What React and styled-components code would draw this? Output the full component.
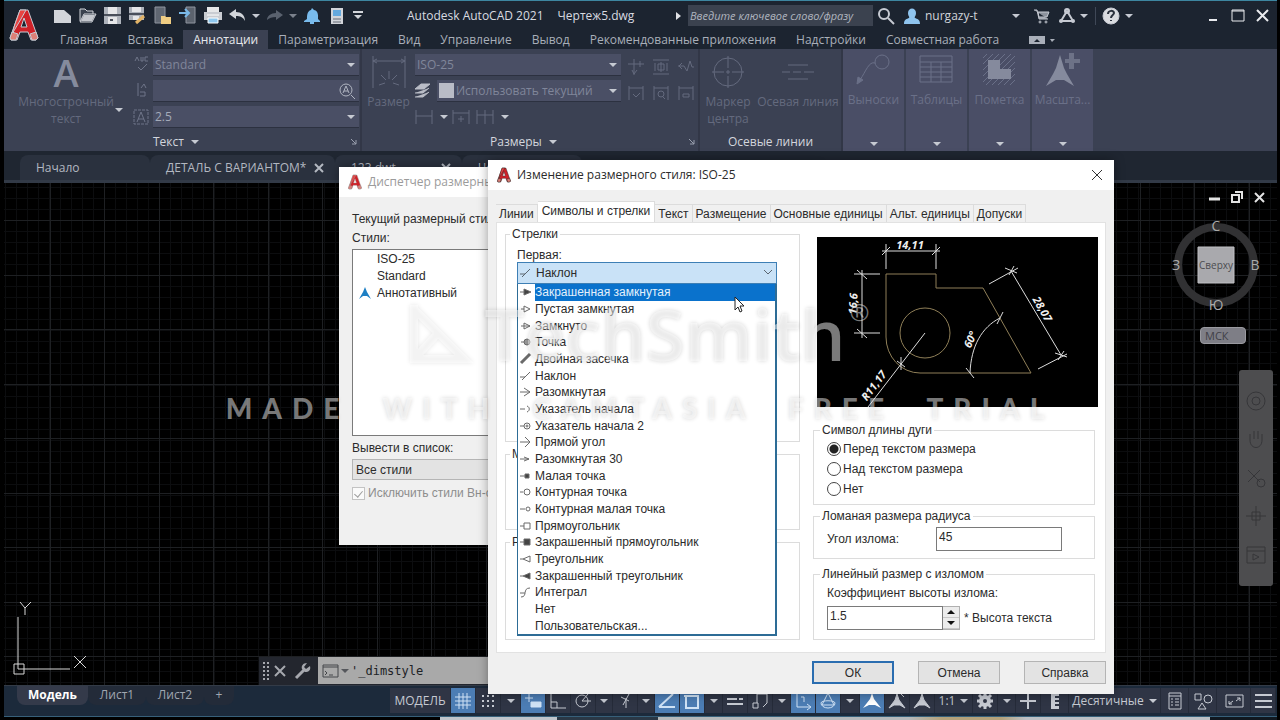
import React from 'react';
import styled, { createGlobalStyle, css } from 'styled-components';

const GlobalStyle = createGlobalStyle`
  * {
    box-sizing: border-box;
  }

  body {
    margin: 0;
    background: #000;
  }

  button,
  input,
  select {
    font: inherit;
    color: inherit;
    margin: 0;
  }
`;

const uiFont = '"Open Sans", "Noto Sans", sans-serif';
const dialogFont = '"Liberation Sans", Arial, sans-serif';

const Page = styled.div`
  position: relative;
  min-height: 100vh;
  display: flex;
  flex-direction: column;
  padding: 0 3px 0 4px;
  overflow: hidden;
  background: #000;
  color: #c6cad2;
  font-family: ${uiFont};
  font-size: 12px;
  line-height: 16px;
`;

const Svg = styled.svg`
  display: block;
  flex: none;
  fill: none;
  stroke: currentColor;
  overflow: visible;
`;

const Caret = styled.span`
  flex: none;
  width: 0;
  height: 0;
  border: 4px solid transparent;
  border-top-color: ${props => props.$color || '#c6cad2'};
  border-bottom-width: 0;
`;

const PlainButton = styled.button`
  display: flex;
  align-items: center;
  justify-content: center;
  flex: none;
  width: ${props => props.$width || 25}px;
  padding: 0;
  border: 0;
  background: none;
`;

/* header */

const Header = styled.header`
  display: flex;
  border-top: 1px solid #3d86a0;
  background: #1c2430;
`;

const AppButton = styled(PlainButton)`
  width: 46px;
  padding-right: 6px;
`;

const HeaderRows = styled.div`
  flex: 1;
  min-width: 0;
`;

const TitleBar = styled.div`
  height: 29px;
  display: flex;
  align-items: center;
`;

const DocTitle = styled.div`
  display: flex;
  gap: 14px;
  margin-left: 40px;
  color: #d8dbe0;
  white-space: nowrap;
`;

const TitleTools = styled.div`
  display: flex;
  align-items: center;
  margin: 0 2px 0 auto;
`;

const SearchInput = styled.input`
  width: 185px;
  height: 21px;
  margin-left: 6px;
  padding: 0 2px;
  border: 0;
  background: #3b424f;
  font-size: 11px;
  font-style: italic;

  &::placeholder {
    color: #b0b5bf;
    opacity: 1;
  }
`;

const UserButton = styled(PlainButton)`
  width: 131px;
  justify-content: flex-start;
  gap: 4px;
  padding-left: 5px;
  color: #d0d3d9;

  ${Caret} {
    margin: 0 9px 0 auto;
  }
`;

const Divider = styled.span`
  width: 1px;
  height: 18px;
  margin: 0 2px 0 6px;
  background: #3f4857;
`;

const WindowButtons = styled.div`
  display: flex;
  margin-left: 65px;
  color: #e9ebee;
`;

const MenuTabs = styled.nav`
  display: flex;
  height: 19px;
`;

const MenuTab = styled.a`
  padding: 2px 10px 0;
  color: ${props => (props.$active ? '#e6e8ec' : '#a9afb9')};
  background: ${props => (props.$active ? '#3b4152' : 'none')};
  text-decoration: none;
  white-space: nowrap;
`;

/* ribbon */

const Ribbon = styled.section`
  display: flex;
  height: 102px;
  background: #3b4153;
  color: #646a7e;
`;

const Panel = styled.div`
  display: grid;
  grid-template-rows: 1fr 19px;
  flex: none;
  width: ${props => props.$width}px;
  border-right: 2px solid #323747;
`;

const PanelBody = styled.div`
  display: flex;
  padding-top: 5px;
`;

const PanelTitle = styled.div`
  display: flex;
  align-items: center;
  justify-content: center;
  gap: 7px;
  padding-left: ${props => props.$indent || 0}px;
  color: #d3d6dd;
`;

const TitleButton = styled(PlainButton)`
  width: auto;
  gap: 7px;
  color: inherit;
  ${props => props.$left && css`margin-right: auto;`}
`;

const Launcher = styled(PlainButton)`
  width: 12px;
  color: #9aa0af;
`;

const BigButton = styled.button`
  display: flex;
  flex-direction: column;
  align-items: center;
  gap: 3px;
  flex: none;
  width: ${props => props.$width}px;
  margin-left: ${props => props.$indent || 0}px;
  padding: 0;
  border: 0;
  background: none;
  color: inherit;
  line-height: 17px;
  text-align: center;
`;

const BigIcon = styled.span`
  height: 36px;
  display: flex;
  align-items: center;
`;

const BigLetter = styled.span`
  height: 36px;
  color: #858b9d;
  font-size: 38px;
  font-weight: 600;
  line-height: 36px;
`;

const SideCaret = styled(Caret)`
  margin: 54px 6px 0 0;
`;

const IconColumn = styled.div`
  display: flex;
  flex-direction: column;
  justify-content: space-between;
  align-items: center;
  width: 24px;
  height: 73px;
  padding: 2px 0;
  color: #6f7589;
`;

const Fields = styled.div`
  display: flex;
  flex-direction: column;
  gap: 4px;
  width: 206px;
  height: 74px;
`;

const FieldRow = styled.div`
  display: flex;
  align-items: center;
  height: 22px;
`;

const Field = styled.div`
  flex: 1;
  height: 22px;
  display: flex;
  align-items: center;
  padding-right: 4px;
  border-bottom: 1px solid #2c3140;
  background: #4a4f65;
  color: ${props => (props.$bright ? '#a5abb9' : '#80869a')};

  select,
  input {
    flex: 1;
    min-width: 0;
    height: 20px;
    padding: 0 2px;
    border: 0;
    appearance: none;
    background: none;
    opacity: 1;
  }
`;

const Swatch = styled.span`
  width: 15px;
  height: 15px;
  margin-left: 2px;
  background: #b9bcc6;
`;

const SmallGrid = styled.div`
  display: grid;
  grid-template-columns: repeat(3, 25px);
  grid-auto-rows: 26px;
  place-items: center;
  margin-left: 2px;
  height: 52px;
`;

const CollapsedPanel = styled.button`
  display: flex;
  flex-direction: column;
  align-items: center;
  gap: 5px;
  flex: none;
  width: 61px;
  margin-right: 2px;
  padding: 4px 0 5px;
  border: 0;
  background: #4a4e66;
  color: #6a7088;

  ${Caret} {
    margin-top: auto;
  }
`;

const FileTabs = styled.nav`
  display: flex;
  align-items: flex-end;
  height: 32px;
  padding-left: 16px;
  border-bottom: 3px solid #323a47;
  background: #1f2631;
`;

const FileTab = styled.a`
  display: flex;
  align-items: center;
  justify-content: space-between;
  width: ${props => props.$width}px;
  height: 25px;
  padding: 0 12px 0 16px;
  border-radius: 8px 8px 0 0;
  background: #2a313e;
  color: #b3b8c1;
  text-decoration: none;
  white-space: nowrap;
`;

/* drawing area */

const Canvas = styled.main`
  position: relative;
  flex: 1;
  min-height: 400px;
  background-color: #000;
  background-image:
    linear-gradient(90deg, #1e2023 1px, transparent 1px),
    linear-gradient(90deg, #1e2023 1px, transparent 1px),
    linear-gradient(#1e2023 1px, transparent 1px),
    linear-gradient(#1e2023 1px, transparent 1px),
    linear-gradient(90deg, #0c0d0f 1px, transparent 1px),
    linear-gradient(#0c0d0f 1px, transparent 1px);
  background-size: 109px 100%, 109px 100%, 100% 109px, 100% 109px, 11px 100%, 100% 11px;
  background-position: 100px 0, 46px 0, 0 92px, 0 37px, 1px 0, 0 4px;
`;

const Ucs = styled(Svg)`
  position: absolute;
  left: 8px;
  bottom: 8px;
  color: #d8d8d8;
`;

const ViewTools = styled.div`
  position: absolute;
  top: 0;
  right: 4px;
  width: 100px;
  display: flex;
  flex-direction: column;
  align-items: center;
`;

const ViewButtons = styled.div`
  display: flex;
  gap: 2px;
  align-self: flex-end;
  padding: 8px 4px 8px 0;
  color: #e3e3e3;
`;

const CubeText = styled.text`
  fill: ${props => (props.$dark ? '#4c4c50' : '#aaa')};
  stroke: none;
  font-size: ${props => (props.$dark ? 10 : 14)}px;
  text-anchor: middle;
`;

const UcsName = styled.button`
  width: 46px;
  height: 17px;
  margin-top: 16px;
  padding: 0 0 0 4px;
  border: 1px solid #9a9aa0;
  border-radius: 4px;
  background: #7e7e86;
  color: #3f4046;
  font-size: 11px;
  line-height: 13px;
  text-align: left;
`;

const NavBar = styled.div`
  display: flex;
  flex-direction: column;
  align-items: center;
  justify-content: space-around;
  align-self: flex-end;
  width: 34px;
  height: 216px;
  margin-top: 26px;
  padding: 12px 0;
  border-radius: 3px;
  background: #4d4d4f;
  color: #363639;
`;

const CommandLine = styled.div`
  position: absolute;
  left: 255px;
  right: 300px;
  bottom: 0;
  display: flex;
  height: 28px;
  background: #23262e;
  color: #a6a8ae;
`;

const CommandField = styled.label`
  display: flex;
  align-items: center;
  flex: 1;
  gap: 2px;
  margin-bottom: 1px;
  padding-left: 4px;
  background: #a9a9a9;
  color: #44464a;

  input {
    flex: 1;
    min-width: 0;
    padding: 0;
    border: 0;
    background: none;
    color: #202226;
    font-family: "DejaVu Sans Mono", "Liberation Mono", monospace;
    font-size: 12px;
  }
`;

/* bottom bar */

const BottomBar = styled.footer`
  display: flex;
  justify-content: space-between;
  height: 32px;
  border-top: 1px solid #333b47;
  border-bottom: 1px solid #37607a;
  background: #1c2a3b;
`;

const LayoutTabs = styled.nav`
  display: flex;
  height: 19px;
  padding-left: 13px;
`;

const LayoutTab = styled.a`
  width: ${props => props.$width}px;
  padding-top: 1px;
  border-radius: 0 0 8px 8px;
  background: ${props => (props.$active ? '#343a4a' : '#232b39')};
  color: ${props => (props.$active ? '#fff' : '#a0a6b1')};
  font-weight: ${props => (props.$active ? 700 : 400)};
  text-align: center;
  text-decoration: none;
`;

const StatusTools = styled.div`
  display: flex;
  height: 25px;
  margin: 2px 1px 0 0;
  background: #2f3545;
`;

const StatusButton = styled(PlainButton)`
  gap: 5px;
  border-right: 1px solid #252b39;
  background: ${props => (props.$on ? '#4c7db4' : 'none')};
  color: ${props => (props.$on ? '#cfe2f5' : '#c6cad2')};
  white-space: nowrap;
`;

const Taskbar = styled.div`
  height: 3px;
  margin-left: 436px;
  background: linear-gradient(90deg, #bfc5cb 14%, #2a3846 14% 26%, #b5b9bb 26% 56%, #b4a27a 60% 67%, #bdc1c6 70% 92%, #101820 92%);
`;

/* dialogs */

const Dialog = styled.div`
  position: absolute;
  left: ${props => props.$x}px;
  top: ${props => props.$y}px;
  width: ${props => props.$width}px;
  background: #f0f0f0;
  color: #2b2b2b;
  font-family: ${dialogFont};
  font-size: 12px;
  line-height: 14px;
  box-shadow: 0 0 10px rgba(0, 0, 0, 0.35);
`;

const DialogHead = styled.div`
  display: flex;
  align-items: center;
  gap: 6px;
  height: 30px;
  padding: 0 5px 0 9px;
  background: #fff;
  color: ${props => (props.$inactive ? '#9b9b9b' : '#2b2b2b')};
  font-family: ${uiFont};
  white-space: nowrap;

  button {
    margin-left: auto;
    color: #333;
  }
`;

const ManagerBody = styled.div`
  height: 348px;
  padding: 15px 13px;
`;

const ListLabel = styled.div`
  margin-top: 5px;
`;

const StyleList = styled.ul`
  height: 187px;
  width: 170px;
  margin: 4px 0 5px;
  padding: 0;
  border: 1px solid #7a7a7a;
  background: #fff;
  list-style: none;
`;

const StyleItem = styled.li`
  display: flex;
  align-items: center;
  height: 17px;

  > span:first-child {
    width: 24px;
    padding-left: 6px;
    color: #1d7fc4;
  }
`;

const ListFilter = styled.select`
  display: block;
  width: 170px;
  height: 21px;
  margin: 4px 0 6px;
  padding: 0 3px;
  border: 1px solid #b5b5b5;
  background: #e3e3e3;
  appearance: none;
`;

const CheckLabel = styled.label`
  display: flex;
  align-items: center;
  gap: 3px;
  color: #8d8d8d;
  white-space: nowrap;

  input {
    display: flex;
    align-items: center;
    justify-content: center;
    width: 13px;
    height: 13px;
    border: 1px solid #c3c3c3;
    background: #fafafa;
    appearance: none;
  }

  input:checked::before {
    content: '';
    width: 4px;
    height: 7px;
    border: solid #9c9c9c;
    border-width: 0 1px 1px 0;
    transform: rotate(40deg);
  }
`;

const EditBody = styled.div`
  padding: 11px 8px 10px;
`;

const TabList = styled.div`
  display: flex;
  align-items: flex-end;
  height: 21px;
`;

const Tab = styled.button`
  height: ${props => (props.$active ? 21 : 18)}px;
  padding: ${props => (props.$active ? '0 4px 3px' : '0 3px')};
  border: 1px solid #dcdcdc;
  border-width: 1px 1px 0 0;
  background: ${props => (props.$active ? '#fff' : '#f0f0f0')};
  white-space: nowrap;
`;

const TabPanel = styled.div`
  display: grid;
  grid-template-columns: 295px 282px;
  justify-content: space-between;
  height: 431px;
  padding: 4px 10px 15px 8px;
  border: 1px solid #e2e2e2;
  background: #fff;
`;

const LeftColumn = styled.div`
  display: grid;
  grid-template-rows: 215px 83px 1fr;
  gap: 5px;
`;

const RightColumn = styled.div`
  display: flex;
  flex-direction: column;
  padding-top: 10px;
`;

const Group = styled.fieldset`
  min-width: 0;
  margin: 0;
  padding: ${props => props.$pad || '0 11px'};
  border: 1px solid #dcdcdc;
  ${props => props.$height && css`height: ${props.$height}px;`}
  ${props => props.$top && css`margin-top: ${props.$top}px;`}

  legend {
    margin-left: -7px;
    padding: 0 2px;
    white-space: nowrap;
  }
`;

const ComboLabel = styled.label`
  display: block;
  margin-top: 7px;
`;

const Combo = styled.div`
  position: relative;
  width: 260px;
`;

const ComboSelect = styled.select`
  display: block;
  width: 100%;
  height: 22px;
  padding: 0 18px;
  border: 1px solid #3d7fb5;
  background: #c9e2f7;
  appearance: none;
`;

const ComboMark = styled.span`
  position: absolute;
  top: 5px;
  ${props => (props.$right ? 'right: 4px;' : 'left: 3px;')}
  color: #5b6670;
  pointer-events: none;
`;

const Options = styled.ul`
  position: absolute;
  z-index: 1;
  top: 22px;
  left: 0;
  right: 0;
  display: flex;
  flex-direction: column;
  height: 352px;
  margin: 0;
  padding: 0;
  border: 1px solid #2d6c96;
  border-width: 0 2px 2px 1px;
  background: #fff;
  list-style: none;
`;

const Option = styled.li`
  flex: 1;
  display: flex;
  align-items: center;
  min-height: 0;

  > span:first-child {
    width: 17px;
    padding-left: 2px;
    color: #6a6a6a;
  }

  > span:last-child {
    flex: 1;
    align-self: stretch;
    display: flex;
    align-items: center;
    background: ${props => (props.$selected ? '#0a72cc' : 'none')};
    color: ${props => (props.$selected ? '#e3f0fb' : 'inherit')};
  }
`;

const Preview = styled.svg`
  display: block;
  width: 281px;
  height: 170px;
  margin: 0 0 16px 4px;
  background: #000;
  fill: none;
  stroke: #dcdcdc;

  text {
    fill: #f0f0f0;
    stroke: none;
    font: italic 700 11px ${uiFont};
    text-anchor: middle;
  }
`;

const Radio = styled.label`
  display: flex;
  align-items: center;
  gap: 2px;
  height: 20px;

  input {
    appearance: none;
    width: 14px;
    height: 14px;
    border: 1px solid #444;
    border-radius: 50%;
    background: #fff;
  }

  input:checked {
    background: radial-gradient(circle, #222 0 4px, #fff 5px);
  }
`;

const InputRow = styled.div`
  display: flex;
  align-items: center;
  gap: ${props => props.$gap || 0}px;
  margin-top: ${props => props.$top || 0}px;

  label {
    min-width: ${props => props.$label || 0}px;
  }
`;

const TextInput = styled.input`
  width: ${props => props.$width}px;
  height: 24px;
  padding: 0 2px 4px;
  border: 1px solid #7a7a7a;
  background: #fff;
`;

const Spinner = styled.div`
  display: flex;

  > div {
    display: grid;
    width: 17px;
    border: 1px solid #b0b0b0;
    border-left: 0;
  }

  button {
    width: auto;
    background: #ececec;
    border-bottom: 1px solid #c8c8c8;
  }
`;

const Up = styled(Caret)`
  border-color: transparent transparent #111;
  border-width: 0 4px 4px;
`;

const DialogButtons = styled.div`
  display: flex;
  justify-content: flex-end;
  gap: 24px;
  margin-top: 8px;
`;

const DialogButton = styled.button`
  width: 82px;
  height: 23px;
  padding: 0;
  border: ${props => (props.$primary ? '2px solid #2a6db0' : '1px solid #b4b4b4')};
  background: #e3e3e3;
`;

/* watermark */

const Watermark = styled.div`
  position: absolute;
  z-index: 2;
  top: 286px;
  left: 0;
  right: 0;
  display: flex;
  flex-direction: column;
  align-items: center;
  color: rgba(255, 255, 255, 0.48);
  text-shadow: 0 0 4px rgba(0, 0, 0, 0.16);
  pointer-events: none;
`;

const Brand = styled.div`
  display: flex;
  align-items: center;
  gap: 16px;
  font-size: 71px;
  font-weight: 600;
  line-height: 96px;

  svg {
    filter: drop-shadow(0 0 2px rgba(0, 0, 0, 0.2));
  }

  sup {
    align-self: flex-start;
    margin-left: -12px;
    font-size: 24px;
    font-weight: 400;
    line-height: 52px;
  }
`;

const Slogan = styled.div`
  margin-top: 8px;
  font-family: Lato, ${uiFont};
  font-size: 28px;
  font-weight: 900;
  line-height: 36px;
  letter-spacing: 10px;
  white-space: pre;
`;

const Pointer = styled(Svg)`
  position: absolute;
  z-index: 3;
  left: 734px;
  top: 296px;
`;

const Icon = ({ size = 16, width, stroke = 1, children }) => (
  <Svg
    width={width || size}
    height={size}
    viewBox={`0 0 ${width || size} ${size}`}
    strokeWidth={stroke}
    aria-hidden="true"
  >
    {children}
  </Svg>
);

const RedA = ({ size }) => (
  <Svg width={size} height={size} viewBox="0 0 28 30" stroke="none" aria-hidden="true">
    <path d="M10 0h8l10 28-2 2h-5l-3-8H10l-3 8H1l-1-2zM14 8l-3 9h6z" fill="#cf2128" fillRule="evenodd" />
    <path d="M10 0h6l-5 9-9 15 3-10z" fill="#e84442" />
    <path d="M2 22l6 2-2 6H1l-1-2zM26 22l-6 2 2 6h4l2-2z" fill="#dd8078" />
  </Svg>
);

const Person = () => (
  <Icon size={18}>
    <path d="M1 17c0-5 3-5 5-6 1-1-1-2-1-5 0-6 8-6 8 0 0 3-2 4-1 5 2 1 5 1 5 6z" fill="#8fc4ee" stroke="none" />
  </Icon>
);

const quickTools = [
  ['Новый', <path key="a" d="M0 3h10l7 6v7H0z" fill="#d2d5da" stroke="none" />],
  ['Открыть', <g key="a"><path d="M1 14V2h5l2 2h6v3M1 15l4-8h12l-4 8z" fill="#3a424e" stroke="#d2d5da" /><path d="M5 8h11l-3 6H2z" fill="#c5c8ce" stroke="none" /></g>],
  ['Сохранить', <g key="a"><path d="M0 0h17v17H0z" fill="#aeb3bb" stroke="none" /><path d="M4 0h9v7H4zM4 10h9v7H4z" fill="#e6e7e9" stroke="none" /><path d="M0 8h17M6 13h3" stroke="#4a505b" strokeWidth="2" /></g>],
  ['Сохранить как', <g key="a"><path d="M0 0h15v13H0z" fill="#aeb3bb" stroke="none" /><path d="M3 0h9v5H3zM4 9h6v4H4z" fill="#e6e7e9" stroke="none" /><path d="M0 7h15" stroke="#4a505b" strokeWidth="2" /><path d="M7 16l8-7" stroke="#e2b468" strokeWidth="3" /></g>],
  ['Открыть из облака', <g key="a"><path d="M1 0h10v16H1z" fill="#606772" stroke="#8f959f" /><path d="M7 9h4l1 1h5v7H7z" fill="#f0cd83" stroke="none" /></g>],
  ['Сохранить в облаке', <g key="a"><path d="M7 0h9v16H7z" fill="#5c636e" stroke="#8f959f" /><path d="M0 6h9M6 2l4 4-4 4" stroke="#7ab9e8" strokeWidth="2" /></g>],
  ['Печать', <g key="a"><path d="M3 0h12v5H3z" fill="#e6e7e9" stroke="none" /><path d="M0 5h18v8H0z" fill="#c9ccd2" stroke="none" /><path d="M3 8h12M4 11h10v5H4z" fill="#8fc8ef" stroke="#fff" /></g>],
  ['Отменить', <path key="a" d="M0 7l7-5v3c5 0 9 3 9 9-2-4-5-5-9-5v3z" fill="#d2d5da" stroke="none" />],
];

const menuTabs = [
  'Главная', 'Вставка', 'Аннотации', 'Параметризация', 'Вид', 'Управление',
  'Вывод', 'Рекомендованные приложения', 'Надстройки', 'Совместная работа',
];

const dimIcons = [
  <path key="1" d="M0 5h16M6 0v16M12 2v6M4 11l2 4 3-4" />,
  <path key="2" d="M0 1h16M0 15h16M8 3v10M2 4v8M14 4v8M5 5h6v6H5z" />,
  <path key="3" d="M0 7h6l3 5 3-10 2 6h2M4 4L1 7l3 3" />,
  <path key="4" d="M1 1v14M15 1v14M1 3h14M5 9l3 3 4-4" />,
  <path key="5" d="M1 1v14M15 1v14M1 3h14M5 9a3 3 0 106 0 3 3 0 10-6 0M10 12l2 2" />,
  <path key="6" d="M1 1v14M15 1v14M1 3h14M5 9h6v3H5z" />,
];

const collapsed = [
  ['Выноски', <g key="a"><circle cx="25" cy="9" r="7" /><path d="M18 10c-6-2-9 8-15 17" /><path d="M0 31l1-7 5 3z" fill="currentColor" /></g>],
  ['Таблицы', <path key="a" d="M0 3h32v26H0zM0 9h32M0 14h32M0 19h32M0 24h32M11 9v20M21 9v20" />],
  ['Пометка', <g key="a"><path d="M0 5l4-4M0 11L10 1M0 17L16 1M0 23L22 1M0 29L28 1M3 32L32 3M9 32l23-23M15 32l17-17M21 32l11-11M27 32l5-5" /><path d="M5 7h12v9h11v10H5z" fill="#858a9d" stroke="none" /></g>],
  ['Масшта...', <g key="a" stroke="none" fill="#858a9d"><path d="M14 2l4 13 3 6 7 12-10-6h-8L0 33l7-12 3-6z" /><path d="M23 0h5v6h6v4h-6v6h-5v-6h-4V6h4z" fill="#6d7287" /></g>],
];

const arrows = [
  ['Закрашенная замкнутая', <path key="a" d="M0 6h4M4 3l7 3-7 3z" fill="#444" />],
  ['Пустая замкнутая', <path key="a" d="M1 6h3M4 3l6 3-6 3z" />],
  ['Замкнуто', <path key="a" d="M1 6h9M4 3l6 3-6 3z" />],
  ['Точка', <path key="a" d="M1 6h3M4 6a3 3 0 106 0 3 3 0 10-6 0" fill="#999" />],
  ['Двойная засечка', <path key="a" d="M1 10l9-9" strokeWidth="3" />],
  ['Наклон', <path key="a" d="M0 7h5M2 10l8-8" />],
  ['Разомкнутая', <path key="a" d="M0 6h10M4 2l6 4-6 4" />],
  ['Указатель начала', <path key="a" d="M0 6h5M7 3c3 1 3 5 0 6" />],
  ['Указатель начала 2', <g key="a"><path d="M0 6h4" /><circle cx="7" cy="6" r="3" /><circle cx="7" cy="6" r="1" /></g>],
  ['Прямой угол', <path key="a" d="M0 6h10M5 1l5 5-5 5" />],
  ['Разомкнутая 30', <path key="a" d="M0 6h9M4 4l5 2-5 2" />],
  ['Малая точка', <path key="a" d="M0 6h5M5 4h4v4H5z" fill="#444" />],
  ['Контурная точка', <g key="a"><path d="M0 6h3" /><circle cx="7" cy="6" r="3" /></g>],
  ['Контурная малая точка', <g key="a"><path d="M0 6h5" /><circle cx="8" cy="6" r="2" /></g>],
  ['Прямоугольник', <path key="a" d="M0 6h4M4 3h6v6H4z" />],
  ['Закрашенный прямоугольник', <path key="a" d="M0 6h4M4 3h6v6H4z" fill="#444" />],
  ['Треугольник', <path key="a" d="M0 6h3M10 3L3 6l7 3z" />],
  ['Закрашенный треугольник', <path key="a" d="M0 6h3M10 3L3 6l7 3z" fill="#444" />],
  ['Интеграл', <path key="a" d="M0 7h5M1 11c7 0 1-9 9-9" />],
  ['Нет', null],
  ['Пользовательская...', null],
];

const statusItems = [
  { label: 'Сетка', on: true, icon: <path d="M4 0v16M8 0v16M12 0v16M0 4h16M0 8h16M0 12h16" /> },
  { label: 'Привязка к сетке', icon: <path d="M2 3h12M2 8h12M2 13h12" strokeWidth="2" strokeDasharray="2 3" /> },
  { caret: true, width: 20 },
  { label: 'Динамический ввод', on: true, icon: <path d="M0 5h8M4 1v8M6 9h10v5H6z" fill="currentColor" /> },
  { label: 'Ортогональный режим', icon: <path d="M1 0v15h15M1 9h6v6" /> },
  { label: 'Полярное отслеживание', icon: <path d="M1 8a6 6 0 1012 0 6 6 0 10-12 0M7 8h9M7 8l6-7" /> },
  { caret: true, width: 17 },
  { label: 'Изометрическое проектирование', icon: <path d="M4 4l8 4M9 5v10M12 1L6 12" /> },
  { caret: true, width: 17 },
  { label: 'Отслеживание привязки', on: true, icon: <path d="M0 14h16M0 14L14 1" strokeWidth="2" /> },
  { label: 'Объектная привязка', on: true, icon: <path d="M2 3h12v12H2zM0 3h4" strokeWidth="2" /> },
  { caret: true, width: 18 },
  { label: 'Вес линий', icon: <path d="M0 6h10M0 11h16M12 6h4" strokeWidth="2" /> },
  { label: 'Циклический выбор', icon: <path d="M5 1h10v9l-4 4M1 10h5v5H1zM5 10V1" /> },
  { caret: true, width: 18 },
  { label: 'Динамическая ПСК', on: true, icon: <path d="M2 0v14h13M12 11l4 3-4 3M6 4h3v5" /> },
  { label: '3D привязка', on: true, icon: <path d="M8 0l6 12H2zM1 10a7 5 0 0014 0c0-3-14-3-14 0" /> },
  { caret: true, width: 19 },
  { label: 'Видимость аннотаций', on: true, icon: <path d="M8 0l2 6 7 9-6-3H5l-6 3 7-9z" fill="#fff" stroke="none" /> },
  { label: 'Автомасштаб', icon: <path d="M8 1l2 6 6 8-5-3H5l-5 3 6-8zM12 1l3 3" fill="currentColor" /> },
  { label: 'Масштаб аннотаций', icon: <path d="M8 1l2 6 6 8-5-3H5l-5 3 6-8z" fill="currentColor" /> },
  { text: '1:1', width: 38 },
  { label: 'Рабочее пространство', icon: <g><circle cx="8" cy="8" r="4" strokeWidth="4" /><path d="M8 0v3M8 13v3M0 8h3M13 8h3M2 2l3 3M11 11l3 3M14 2l-3 3M5 11l-3 3" strokeWidth="3" /></g> },
  { caret: true, width: 18 },
  { label: 'Монитор аннотаций', icon: <path d="M8 0v16M0 8h16" strokeWidth="2" /> },
  { label: 'Единицы', width: 28, icon: <path d="M4 0h8v3H8v2h4v2H8v2h4v2H8v2h4v3H4z" fill="currentColor" stroke="none" /> },
  { text: 'Десятичные', width: 92 },
  { label: 'Быстрые свойства', width: 28, icon: <path d="M2 0h12v16H2zM2 3h12M4 6h2M8 6h4M4 9h2M8 9h4M4 12h2M8 12h4" /> },
  { label: 'Изоляция объектов', width: 28, icon: <path d="M0 1h6v6H0zM9 6a4 4 0 108 0 4 4 0 10-8 0M7 10l4 6H3z" /> },
  { label: 'Чистый экран', width: 34, icon: <path d="M0 2h17v12H0zM3 11l4-3M3 8v3h3M14 5l-4 3M14 8V5h-3" /> },
  { label: 'Адаптация', icon: <path d="M0 2h17M0 8h17M0 14h17" strokeWidth="2" /> },
];

const TextPanel = () => (
  <Panel $width={358}>
    <PanelBody>
      <BigButton $width={98} $indent={13} disabled>
        <BigLetter>A</BigLetter>
        Многострочный текст
      </BigButton>
      <SideCaret />
      <IconColumn>
        <Icon size={15}><path d="M1 5l2-4 2 4M7 1v4h2V1M14 1h-3v4h3M4 11l3 3 6-6" /></Icon>
        <Icon><path d="M5 1v13M8 6l3-4 2 4M7 10h5v4H7" /></Icon>
        <Icon><path d="M1 1h14v14H1z" strokeDasharray="3 1" /><path d="M4 13L8 3l4 10M5 10h6" /></Icon>
      </IconColumn>
      <Fields>
        <Field>
          <select aria-label="Текстовый стиль" disabled><option>Standard</option></select>
          <Caret />
        </Field>
        <Field>
          <input aria-label="Найти текст" disabled />
          <Icon><circle cx="7" cy="7" r="6" stroke="#b0b5c1" /><path d="M4 10l3-7 3 7M5 8h4M12 12l4 4" stroke="#b0b5c1" /></Icon>
        </Field>
        <Field $bright>
          <select aria-label="Высота текста" disabled><option>2.5</option></select>
          <Caret />
        </Field>
      </Fields>
    </PanelBody>
    <PanelTitle $indent={149}>
      <TitleButton $left>Текст <Caret /></TitleButton>
      <Launcher aria-label="Стили текста"><Icon size={6}><path d="M0 0l5 5M5 1v4H1" /></Icon></Launcher>
    </PanelTitle>
  </Panel>
);

const DimPanel = () => (
  <Panel $width={338}>
    <PanelBody>
      <BigButton $width={53} disabled>
        <BigIcon>
          <Icon size={34}><path d="M1 1v32M33 1v32M1 6h32M5 4L1 6l4 2M29 4l4 2-4 2M7 30l6-2M17 16v8M27 30l-6-2M9 20l5 5M25 20l-5 5" /></Icon>
        </BigIcon>
        Размер
      </BigButton>
      <Fields>
        <Field>
          <select aria-label="Размерный стиль" disabled><option>ISO-25</option></select>
          <Caret />
        </Field>
        <FieldRow>
          <Icon width={22}><path d="M0 6l6-5h9l-6 5zM0 10h8l6-5M0 14h8l6-5" fill="#b9bcc6" stroke="#b9bcc6" /></Icon>
          <Field>
            <Swatch />
            <select aria-label="Слой размеров" disabled><option>Использовать текущий</option></select>
            <Caret />
          </Field>
        </FieldRow>
        <FieldRow>
          <Icon width={20}><path d="M1 1v14M17 1v14M1 7h16" /></Icon>
          <PlainButton $width={17} aria-label="Линейный"><Caret /></PlainButton>
          <Icon width={24}><path d="M1 1v14M17 1v14M1 4h16M6 10h6M9 7v6" /></Icon>
          <Icon width={20}><path d="M1 1v14M9 1v14M17 1v14M1 6h16" /></Icon>
          <PlainButton $width={17} aria-label="Цепь"><Caret /></PlainButton>
        </FieldRow>
      </Fields>
      <SmallGrid>
        {dimIcons.map((icon, i) => <Icon key={i}>{icon}</Icon>)}
      </SmallGrid>
    </PanelBody>
    <PanelTitle $indent={128}>
      <TitleButton $left>Размеры <Caret /></TitleButton>
      <Launcher aria-label="Стили размеров"><Icon size={6}><path d="M0 0l5 5M5 1v4H1" /></Icon></Launcher>
    </PanelTitle>
  </Panel>
);

const StyleManager = () => (
  <Dialog role="dialog" aria-label="Диспетчер размерных стилей" $x={339} $y={167} $width={480}>
    <DialogHead $inactive>
      <RedA size={14} />
      Диспетчер размерных стилей
    </DialogHead>
    <ManagerBody>
      Текущий размерный стиль: ISO-25
      <ListLabel>Стили:</ListLabel>
      <StyleList>
        <StyleItem><span />ISO-25</StyleItem>
        <StyleItem><span />Standard</StyleItem>
        <StyleItem>
          <span><Icon size={12}><path d="M6 0l2 5 4 7-4-3H4l-4 3 4-7z" fill="currentColor" stroke="none" /></Icon></span>
          Аннотативный
        </StyleItem>
      </StyleList>
      <label htmlFor="filter">Вывести в список:</label>
      <ListFilter id="filter"><option>Все стили</option></ListFilter>
      <CheckLabel>
        <input type="checkbox" defaultChecked disabled />
        Исключить стили Вн-ссылок
      </CheckLabel>
    </ManagerBody>
  </Dialog>
);

const DimensionPreview = () => (
  <Preview viewBox="0 0 281 170">
    <g stroke="#8f7f58">
      <path d="M69 37h50v14h47l48 85H103a34 36 0 01-34-36z" />
      <circle cx="108" cy="96" r="25" />
    </g>
    <path d="M69 7v25M119 7v25M65 14h58M65 18l8-8M115 18l8-8" />
    <path d="M37 37h26M37 96h26M45 33v68M40 33l10 9M40 92l10 9" />
    <path d="M172 47l29-16M221 132l29-15M194 34l50 84M188 31l12 5M238 116l12 4M192 38l5-9M241 123l6-9" />
    <path d="M183 81c-18 9-29 28-30 55M186 75l-6 12M149 131l8 10" />
    <path d="M108 96l-57 74M84 120v13M80 124l8 6" />
    <text x="93" y="12">14,11</text>
    <text transform="translate(40 67) rotate(-86)">16,6</text>
    <text transform="translate(222 74) rotate(60)">28,07</text>
    <text transform="translate(157 104) rotate(-66)">60°</text>
    <text transform="translate(60 151) rotate(-53)">R11,17</text>
  </Preview>
);

const EditStyle = () => (
  <Dialog role="dialog" aria-label="Изменение размерного стиля" $x={488} $y={160} $width={626}>
    <DialogHead>
      <RedA size={14} />
      Изменение размерного стиля: ISO-25
      <PlainButton aria-label="Закрыть"><Icon size={10}><path d="M0 0l10 10M10 0L0 10" /></Icon></PlainButton>
    </DialogHead>
    <EditBody>
      <TabList role="tablist">
        {['Линии', 'Символы и стрелки', 'Текст', 'Размещение', 'Основные единицы', 'Альт. единицы', 'Допуски'].map((name, i) => (
          <Tab key={name} role="tab" aria-selected={i === 1} $active={i === 1}>{name}</Tab>
        ))}
      </TabList>
      <TabPanel>
        <LeftColumn>
          <Group>
            <legend>Стрелки</legend>
            <ComboLabel htmlFor="first-arrow">Первая:</ComboLabel>
            <Combo>
              <ComboSelect id="first-arrow"><option>Наклон</option></ComboSelect>
              <ComboMark><Icon size={12}>{arrows[5][1]}</Icon></ComboMark>
              <ComboMark $right><Icon size={10}><path d="M1 3l4 4 4-4" /></Icon></ComboMark>
              <Options role="listbox" aria-label="Первая">
                {arrows.map(([name, icon], i) => (
                  <Option key={name} role="option" aria-selected={i === 0} $selected={i === 0}>
                    <span>{icon && <Icon size={12}>{icon}</Icon>}</span>
                    <span>{name}</span>
                  </Option>
                ))}
              </Options>
            </Combo>
          </Group>
          <Group><legend>Маркеры центра</legend></Group>
          <Group><legend>Разрыв размера</legend></Group>
        </LeftColumn>
        <RightColumn>
          <DimensionPreview />
          <Group $height={82} $pad="2px 13px">
            <legend>Символ длины дуги</legend>
            <Radio><input type="radio" name="arc" defaultChecked />Перед текстом размера</Radio>
            <Radio><input type="radio" name="arc" />Над текстом размера</Radio>
            <Radio><input type="radio" name="arc" />Нет</Radio>
          </Group>
          <Group $height={50} $top={4} $pad="4px 13px">
            <legend>Ломаная размера радиуса</legend>
            <InputRow $label={109}>
              <label htmlFor="angle">Угол излома:</label>
              <TextInput id="angle" $width={126} defaultValue="45" />
            </InputRow>
          </Group>
          <Group $height={73} $top={8} $pad="5px 13px">
            <legend>Линейный размер с изломом</legend>
            <label htmlFor="factor">Коэффициент высоты излома:</label>
            <InputRow $gap={4} $top={6}>
              <Spinner>
                <TextInput id="factor" $width={116} defaultValue="1.5" />
                <div>
                  <PlainButton aria-label="Больше"><Up /></PlainButton>
                  <PlainButton aria-label="Меньше"><Caret $color="#111" /></PlainButton>
                </div>
              </Spinner>
              * Высота текста
            </InputRow>
          </Group>
        </RightColumn>
      </TabPanel>
      <DialogButtons>
        <DialogButton $primary>ОК</DialogButton>
        <DialogButton>Отмена</DialogButton>
        <DialogButton>Справка</DialogButton>
      </DialogButtons>
    </EditBody>
  </Dialog>
);

const App = () => (
  <Page>
    <GlobalStyle />
    <Header>
      <AppButton aria-label="Меню приложения"><RedA size={30} /></AppButton>
      <HeaderRows>
        <TitleBar>
          {quickTools.map(([name, icon]) => (
            <PlainButton key={name} aria-label={name}><Icon size={17}>{icon}</Icon></PlainButton>
          ))}
          <PlainButton $width={12} aria-label="Список отмен"><Caret /></PlainButton>
          <PlainButton aria-label="Повторить"><Icon><path d="M16 7l-7-5v3C4 5 0 8 0 12c2-2 5-3 9-3v3z" fill="#59616e" stroke="none" /></Icon></PlainButton>
          <PlainButton $width={12} aria-label="Список повторов"><Caret $color="#7b818c" /></PlainButton>
          <PlainButton aria-label="Уведомления"><Icon><path d="M8 0l2 2c5 1 4 7 4 9l2 2v1H0v-1l3-2c0-3 0-8 4-9z" fill="#79bbec" stroke="none" /><path d="M6 15h4" stroke="#79bbec" strokeWidth="2" /></Icon></PlainButton>
          <PlainButton aria-label="Лист"><Icon><path d="M2 0h12v16H2z" fill="#d2d5da" stroke="none" /><path d="M4 2h8v6H4z" fill="#64a9de" stroke="none" /><path d="M4 11h8M4 14h8" stroke="#646b76" /></Icon></PlainButton>
          <PlainButton $width={18} aria-label="Настройка панели"><Icon size={10}><path d="M0 1h10" strokeWidth="2" stroke="#d2d5da" /><path d="M1 4h8L5 8z" fill="#d2d5da" stroke="none" /></Icon></PlainButton>
          <DocTitle><span>Autodesk AutoCAD 2021</span><span>Чертеж5.dwg</span></DocTitle>
          <TitleTools>
            <Icon size={8} width={6}><path d="M0 0l5 4-5 4z" fill="#e0e2e6" stroke="none" /></Icon>
            <SearchInput aria-label="Поиск" placeholder="Введите ключевое слово/фразу" />
            <PlainButton aria-label="Найти"><Icon stroke={2}><circle cx="6" cy="6" r="5" /><path d="M10 10l6 6" /></Icon></PlainButton>
            <UserButton><Person />nurgazy-t<Caret /></UserButton>
            <PlainButton aria-label="Магазин"><Icon><path d="M0 2h3l2 9h9M4 4h11l-2 5H5z" fill="#8c929c" /><circle cx="6" cy="14" r="1" /><circle cx="12" cy="14" r="1" /></Icon></PlainButton>
            <PlainButton aria-label="Autodesk App Store"><Icon stroke={2}><path d="M8 3L2 13h12z" /><circle cx="8" cy="3" r="2" /><circle cx="2" cy="13" r="1" /><circle cx="14" cy="13" r="1" /></Icon></PlainButton>
            <PlainButton $width={10} aria-label="Сервисы"><Caret /></PlainButton>
            <Divider />
            <PlainButton aria-label="Справка"><Icon size={18}><circle cx="9" cy="9" r="8" fill="#dadce0" /><path d="M6 7c0-4 6-4 6-1 0 2-3 2-3 5M9 13v1" stroke="#2a313d" strokeWidth="2" /></Icon></PlainButton>
            <PlainButton $width={12} aria-label="Меню справки"><Caret /></PlainButton>
            <WindowButtons>
              <PlainButton aria-label="Свернуть"><Icon size={12}><path d="M2 10h8" strokeWidth="2" /></Icon></PlainButton>
              <PlainButton aria-label="Развернуть"><Icon size={12}><path d="M0 0h12v11H0zM0 1h12" /></Icon></PlainButton>
              <PlainButton aria-label="Закрыть"><Icon size={11} stroke={2}><path d="M0 0l11 11M11 0L0 11" /></Icon></PlainButton>
            </WindowButtons>
          </TitleTools>
        </TitleBar>
        <MenuTabs>
          {menuTabs.map(name => (
            <MenuTab key={name} href="#" $active={name === 'Аннотации'}>{name}</MenuTab>
          ))}
          <PlainButton $width={64} aria-label="Свернуть ленту">
            <Icon size={8} width={24}><path d="M0 0h16v8H0z" fill="#a9afb9" stroke="none" /><path d="M5 6l3-3 3 3z" fill="#1c2430" stroke="none" /><path d="M21 3h5l-3 3z" fill="#a9afb9" stroke="none" /></Icon>
          </PlainButton>
        </MenuTabs>
      </HeaderRows>
    </Header>

    <Ribbon>
      <TextPanel />
      <DimPanel />
      <Panel $width={143}>
        <PanelBody>
          <BigButton $width={56} disabled>
            <BigIcon><Icon size={32}><circle cx="16" cy="16" r="14" /><path d="M0 16h12M20 16h12M16 0v12M16 20v12M14 16h4M16 14v4" /></Icon></BigIcon>
            Маркер центра
          </BigButton>
          <BigButton $width={84} disabled>
            <BigIcon><Icon size={32}><path d="M6 9h20M0 16h8M11 16h8M22 16h10M6 23h20" /></Icon></BigIcon>
            Осевая линия
          </BigButton>
        </PanelBody>
        <PanelTitle>Осевые линии</PanelTitle>
      </Panel>
      {collapsed.map(([name, icon]) => (
        <CollapsedPanel key={name}>
          <Icon size={34}>{icon}</Icon>
          {name}
          <Caret />
        </CollapsedPanel>
      ))}
    </Ribbon>

    <FileTabs>
      <FileTab href="#" $width={130}>Начало</FileTab>
      <FileTab href="#" $width={185}>ДЕТАЛЬ С ВАРИАНТОМ* <Icon size={8} stroke={2}><path d="M0 0l8 8M8 0L0 8" /></Icon></FileTab>
      <FileTab href="#" $width={127}>123.dwt <Icon size={8} stroke={2}><path d="M0 0l8 8M8 0L0 8" /></Icon></FileTab>
      <FileTab href="#" $width={120}>Чертеж5</FileTab>
    </FileTabs>

    <Canvas>
      <Ucs width="76" height="76" viewBox="0 0 76 76">
        <path d="M6 16v52h52M2 63h10v10H2zM8 1l5 6 6-6M13 7v7M62 55l12 12M74 55L62 67" />
      </Ucs>
      <ViewTools>
        <ViewButtons>
          <PlainButton $width={20} aria-label="Свернуть чертеж"><Icon size={12}><path d="M0 8h11" strokeWidth="3" /></Icon></PlainButton>
          <PlainButton $width={20} aria-label="Восстановить чертеж"><Icon size={12} stroke={2}><path d="M1 4h7v7H1zM4 1h7v7" /></Icon></PlainButton>
          <PlainButton $width={20} aria-label="Закрыть чертеж"><Icon size={9} stroke={2}><path d="M0 0l9 9M9 0L0 9" /></Icon></PlainButton>
        </ViewButtons>
        <Svg width="100" height="100" viewBox="0 0 100 100" role="img" aria-label="Видовой куб">
          <circle cx="43" cy="54" r="38" stroke="#313133" strokeWidth="8" />
          <path d="M25 36h36v36H25z" fill="#a9a9ad" stroke="#c0c0c4" />
          <CubeText x="43" y="20">С</CubeText>
          <CubeText x="43" y="99">Ю</CubeText>
          <CubeText x="3" y="59">З</CubeText>
          <CubeText x="82" y="59">В</CubeText>
          <CubeText $dark x="43" y="58">Сверху</CubeText>
        </Svg>
        <UcsName>МСК</UcsName>
        <NavBar>
          <Icon size={20}><circle cx="10" cy="10" r="9" /><circle cx="10" cy="10" r="4" /></Icon>
          <Icon size={20}><path d="M4 10V4M8 9V1M12 9V1M16 10V4M4 10c0 10 12 10 12 0" /></Icon>
          <Icon size={20}><path d="M2 2l12 12M14 2L2 14" /><circle cx="15" cy="15" r="4" /></Icon>
          <Icon size={20}><path d="M10 0v20M0 10h20M6 6h8v8H6z" /></Icon>
          <Icon size={20}><path d="M1 2h18v16H1zM1 6h18M7 9l6 3-6 3z" /></Icon>
        </NavBar>
      </ViewTools>
      <CommandLine>
        <Icon size={28} width={12}><path d="M5 5v20M9 5v20" strokeWidth="2" strokeDasharray="2 2" /></Icon>
        <PlainButton $width={17} aria-label="Закрыть строку"><Icon size={10} stroke={2}><path d="M0 0l10 10M10 0L0 10" /></Icon></PlainButton>
        <PlainButton $width={30} aria-label="Настройка строки"><Icon><path d="M1 15l8-8" strokeWidth="3" /><path d="M15 3l-4 3-2-2 3-4c-4 0-6 3-5 6l3 3c4 0 6-2 5-6z" fill="currentColor" stroke="none" /></Icon></PlainButton>
        <CommandField>
          <Icon width={17} size={14}><path d="M1 1h15v12H1zM1 3h15M3 7l2 2-2 2M7 11h4" /></Icon>
          <Caret $color="#55575c" />
          <input aria-label="Командная строка" defaultValue="'_dimstyle" />
        </CommandField>
      </CommandLine>
    </Canvas>

    <BottomBar>
      <LayoutTabs>
        <LayoutTab href="#" $active $width={71}>Модель</LayoutTab>
        <LayoutTab href="#" $width={58}>Лист1</LayoutTab>
        <LayoutTab href="#" $width={58}>Лист2</LayoutTab>
        <LayoutTab href="#" $width={30}>+</LayoutTab>
      </LayoutTabs>
      <StatusTools>
        <StatusButton $width={61}>МОДЕЛЬ</StatusButton>
        {statusItems.map((item, i) => (
          <StatusButton key={i} $width={item.width} $on={item.on} aria-label={item.label}>
            {item.icon && <Icon>{item.icon}</Icon>}
            {item.text}
            {(item.caret || item.text) && <Caret />}
          </StatusButton>
        ))}
      </StatusTools>
    </BottomBar>
    <Taskbar />

    <StyleManager />
    <EditStyle />

    <Watermark>
      <Brand>
        <Icon size={58} stroke={8}><path d="M4 0v54h50L4 4M28 28L6 52" /></Icon>
        TechSmith
        <sup>®</sup>
      </Brand>
      <Slogan>MADE  WITH  CAMTASIA  FREE  TRIAL</Slogan>
    </Watermark>
    <Pointer width="12" height="18" viewBox="0 0 12 18">
      <path d="M1 1v13l3-3 2 5 2-1-2-5h4z" fill="#fff" stroke="#222" />
    </Pointer>
  </Page>
);

export default App;
